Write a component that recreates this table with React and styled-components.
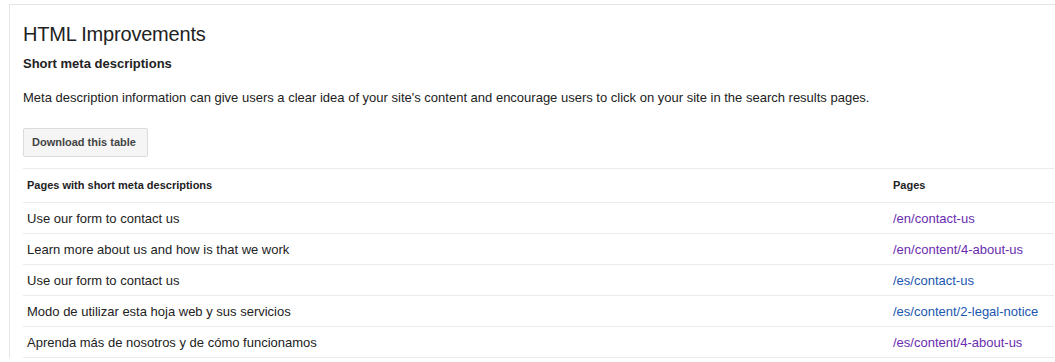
import React from 'react'
import styled, { createGlobalStyle } from "styled-components";

const Global = createGlobalStyle`
body {
  margin: 0;
  background: #fff;
  font-family: Arial, "Liberation Sans", sans-serif;
  color: #222;
}
`
const Page = styled.div`
padding: 4px 0 0 9px;
`
const Panel = styled.div`
border-top: 1px solid #e5e5e5;
border-left: 1px solid #e5e5e5;
padding: 18px 1px 0 13px;
`
const Title = styled.h1`
margin: 0;
font-size: 20px;
font-weight: normal;
line-height: 23px;
color: #222;
letter-spacing: -0.2px;
`
const Subtitle = styled.h2`
margin: 10px 0 0;
font-size: 13px;
font-weight: bold;
line-height: 15px;
color: #222;
`
const Intro = styled.p`
margin: 19px 0 0;
font-size: 13px;
line-height: 15px;
color: #222;
`
const Button = styled.button`
margin-top: 23px;
height: 29px;
width: 125px;
padding: 0 8px 1px;
font-family: Arial, "Liberation Sans", sans-serif;
font-size: 11px;
font-weight: bold;
color: #444;
background: #f5f5f5;
border: 1px solid #dcdcdc;
border-radius: 2px;
text-align: left;
`
const Table = styled.table`
margin-top: 11px;
width: 100%;
border-collapse: collapse;
`
const Head = styled.th`
height: 32px;
padding: 0 4px 1px;
text-align: left;
font-size: 11px;
font-weight: bold;
color: #222;
border-top: 1px solid #ebebeb;
border-bottom: 1px solid #ebebeb;
width: ${p => p.$w || 'auto'};
`
const Cell = styled.td`
height: 30px;
padding: 0 4px;
font-size: 13px;
color: #222;
border-bottom: 1px solid #ebebeb;
`
const PageLink = styled.a`
text-decoration: none;
color: ${p => p.$visited ? '#6a2db0' : '#2156b0'};
`

const rows = [
  { text: 'Use our form to contact us', url: '/en/contact-us', visited: true },
  { text: 'Learn more about us and how is that we work', url: '/en/content/4-about-us', visited: true },
  { text: 'Use our form to contact us', url: '/es/contact-us', visited: false },
  { text: 'Modo de utilizar esta hoja web y sus servicios', url: '/es/content/2-legal-notice', visited: false },
  { text: 'Aprenda más de nosotros y de cómo funcionamos', url: '/es/content/4-about-us', visited: true },
]

const App = () => {
  return (
    <Page>
      <Global />
      <Panel>
        <Title>HTML Improvements</Title>
        <Subtitle>Short meta descriptions</Subtitle>
        <Intro>
          Meta description information can give users a clear idea of your site's content and encourage users to click on your site in the search results pages.
        </Intro>
        <Button>Download this table</Button>
        <Table>
          <thead>
            <tr>
              <Head>Pages with short meta descriptions</Head>
              <Head $w="157px">Pages</Head>
            </tr>
          </thead>
          <tbody>
            {rows.map((r, i) => (
              <tr key={i}>
                <Cell>{r.text}</Cell>
                <Cell><PageLink href="#" $visited={r.visited}>{r.url}</PageLink></Cell>
              </tr>
            ))}
          </tbody>
        </Table>
      </Panel>
    </Page>
  )
}

export default App
